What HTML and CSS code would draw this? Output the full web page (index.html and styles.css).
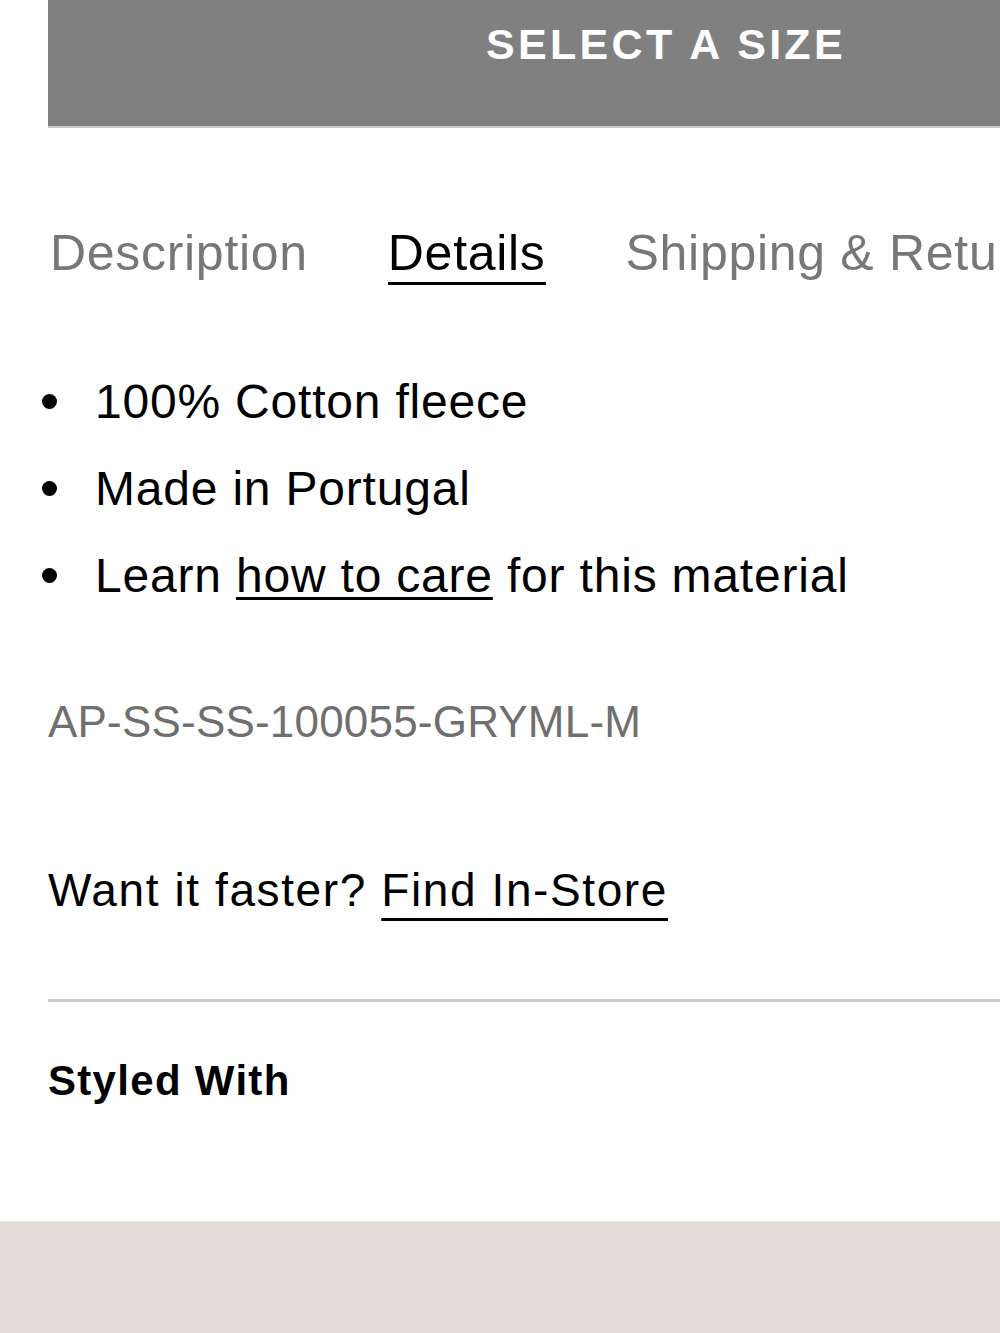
FILE: index.html
```html
<!DOCTYPE html>
<html lang="en">
<head>
<meta charset="utf-8">
<title>Product details</title>
<link rel="stylesheet" href="styles.css">
</head>
<body>
<div class="page">
  <div class="content">
    <div class="size-btn" role="button">SELECT A SIZE</div>

    <nav class="tabs">
      <span class="tab">Description</span>
      <span class="tab active">Details</span>
      <span class="tab">Shipping &amp; Returns</span>
    </nav>

    <ul class="details">
      <li><span class="dot"></span>100% Cotton fleece</li>
      <li><span class="dot"></span>Made in Portugal</li>
      <li><span class="dot"></span>Learn&nbsp;<a class="care" href="#">how to care</a>&nbsp;for this material</li>
    </ul>

    <p class="sku">AP-SS-SS-100055-GRYML-M</p>

    <p class="faster">Want it faster? <a class="store" href="#">Find In-Store</a></p>

    <hr class="divider">

    <h2 class="styled">Styled With</h2>
  </div>
  <div class="band"></div>
</div>
</body>
</html>
```

FILE: styles.css
```css
html, body {
  margin: 0;
  padding: 0;
  overflow: hidden;
  background: #ffffff;
}

.page {
  width: 1000px;
  height: 1333px;
  overflow: hidden;
  font-family: "Liberation Sans", Arial, sans-serif;
  color: #000;
  display: flex;
  flex-direction: column;
}

.content {
  padding-left: 48px;
  height: 1221px;
  box-sizing: border-box;
}

.size-btn {
  width: 1236px;
  height: 128px;
  padding: 23px 0 0;
  border-bottom: 2px solid #c9c9c9;
  background: #808080;
  color: #fff;
  font-weight: 700;
  font-size: 43px;
  line-height: 43px;
  letter-spacing: 3.3px;
  text-align: center;
  box-sizing: border-box;
  cursor: pointer;
}

.tabs {
  margin-top: 96px;
  display: flex;
  gap: 80px;
  white-space: nowrap;
  margin-left: 2px;
}

.tab {
  font-size: 50px;
  line-height: 58px;
  letter-spacing: 0.7px;
  color: #777777;
  border-bottom: 3px solid transparent;
}

.tab.active {
  color: #000;
  border-bottom-color: #000;
}

.details {
  list-style: none;
  margin: 73px 0 0;
  padding: 0;
}

.details li {
  display: flex;
  align-items: center;
  font-size: 48px;
  line-height: 87px;
  letter-spacing: 0.8px;
  white-space: nowrap;
}

.dot {
  width: 15px;
  height: 15px;
  border-radius: 50%;
  background: #000;
  margin-left: -6px;
  margin-right: 38px;
  flex: none;
  position: relative;
  top: 0;
}

.care {
  color: #000;
  text-decoration: underline;
  text-decoration-thickness: 3px;
  text-underline-offset: 5px;
}

.sku {
  margin: 78px 0 0;
  font-size: 44px;
  line-height: 50px;
  letter-spacing: 0.2px;
  color: #6f6f6f;
}

.faster {
  margin: 115px 0 0;
  font-size: 46px;
  line-height: 56px;
  letter-spacing: 1.6px;
  white-space: nowrap;
}

.store {
  color: #000;
  text-decoration: underline;
  text-decoration-thickness: 3px;
  text-underline-offset: 12px;
}

.divider {
  margin: 81px 0 0;
  border: 0;
  height: 3px;
  background: #cccccc;
}

.styled {
  margin: 54px 0 0;
  font-size: 42px;
  line-height: 50px;
  font-weight: 700;
  letter-spacing: 1.3px;
}

.band {
  flex: 1;
  background: #e5dcd7;
  border-top: 1px solid #ece6e2;
}
```
